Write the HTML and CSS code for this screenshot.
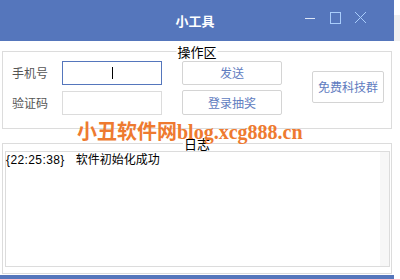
FILE: index.html
```html
<!DOCTYPE html>
<html lang="zh-CN">
<head>
<meta charset="utf-8">
<title>小工具</title>
<link rel="stylesheet" href="styles.css">
</head>
<body>
<div class="page">
  <div class="top">
    <header class="titlebar">
      <span></span>
      <h1 class="title">小工具</h1>
      <svg class="controls" width="62" height="12" viewBox="0 0 62 12">
        <line x1="0" y1="6.5" x2="10" y2="6.5" stroke="#dde6f6" stroke-width="1"/>
        <rect x="25.5" y="0.5" width="10" height="11" fill="none" stroke="#a9cdfb" stroke-width="1"/>
        <line x1="50" y1="0" x2="61" y2="11" stroke="#a9cdfb" stroke-width="1"/>
        <line x1="61" y1="0" x2="50" y2="11" stroke="#a9cdfb" stroke-width="1"/>
      </svg>
    </header>
    <div class="edge"></div>
  </div>

  <section class="group group-ops">
    <span class="legend">操作区</span>
    <div class="form">
      <label class="label">手机号</label>
      <div class="input focused"><span class="caret"></span></div>
      <label class="label">验证码</label>
      <div class="input"></div>
    </div>
    <div class="actions">
      <button class="btn">发送</button>
      <button class="btn">登录抽奖</button>
    </div>
    <div class="side">
      <button class="btn btn-side">免费科技群</button>
    </div>
  </section>

  <section class="group group-log">
    <span class="legend">日志</span>
    <div class="log">
      <div class="log-line"><span class="time">{22:25:38}</span><span class="msg">软件初始化成功</span></div>
      <div class="scroll"></div>
    </div>
  </section>

  <div class="bottom"></div>

  <div class="watermark"><span class="wm-cn">小丑软件网</span><span class="wm-en">blog.xcg888.cn</span></div>
</div>
</body>
</html>
```

FILE: styles.css
```css
* { box-sizing: border-box; }
html, body { margin: 0; padding: 0; background: #ffffff; }
body {
  font-family: "Noto Sans CJK SC", "Noto Sans", sans-serif;
  font-size: 12px;
  color: #000;
}
.page {
  position: relative;
  width: 400px;
  height: 279px;
  overflow: hidden;
}
.top {
  display: flex;
  align-items: flex-start;
}
.titlebar {
  width: 394px;
  height: 41px;
  background: #5576bc;
  display: grid;
  grid-template-columns: 1fr auto 1fr;
  align-items: center;
}
.title {
  margin: 0;
  font-size: 13px;
  font-weight: bold;
  color: #ffffff;
  line-height: 41px;
  position: relative;
  left: -2px;
}
.controls {
  justify-self: end;
  margin-right: 27px;
  margin-top: -6px;
}
.edge {
  width: 6px;
  height: 26px;
  margin-top: 15px;
  background: #f0f0f0;
}

.group {
  position: relative;
  margin-left: 2px;
  width: 390px;
  border: 1px solid #dcdcdc;
}
.legend {
  position: absolute;
  top: -8px;
  left: 50%;
  transform: translateX(-50%);
  background: #ffffff;
  padding: 0 1px;
  font-size: 13px;
  line-height: 15px;
  color: #000;
}
.group-ops {
  margin-top: 10px;
  height: 78px;
  display: flex;
  align-items: flex-start;
  padding: 9px 0 0 9px;
}
.form {
  display: grid;
  grid-template-columns: 50px 100px;
  grid-template-rows: 24px 24px;
  row-gap: 6px;
  align-items: center;
}
.label {
  color: #555555;
  font-size: 12px;
  line-height: 14px;
}
.input {
  height: 24px;
  border: 1px solid #dcdcdc;
  background: #fff;
  display: flex;
  align-items: center;
  justify-content: center;
}
.input.focused { border-color: #5576bc; }
.caret {
  display: block;
  width: 1px;
  height: 12px;
  background: #000;
}
.actions {
  margin-left: 20px;
  display: flex;
  flex-direction: column;
  gap: 5px;
}
.btn {
  font-family: "Noto Sans CJK SC", "Noto Sans", sans-serif;
  font-size: 12px;
  color: #5f7cc0;
  background: #ffffff;
  border: 1px solid #d4d4d4;
  border-radius: 2px;
  width: 100px;
  height: 24px;
  padding: 0;
  line-height: 20px;
}
.actions .btn:last-child { height: 25px; }
.side {
  margin-left: 30px;
  margin-top: 10px;
}
.btn-side {
  width: 72px;
  height: 32px;
}

.group-log {
  margin-top: 14px;
  height: 131px;
  padding: 7px 1px 6px 2px;
}
.log {
  position: relative;
  width: 385px;
  height: 116px;
  border: 1px solid #dcdcdc;
  display: flex;
}
.log-line {
  flex: 1;
  font-size: 12px;
  line-height: 14px;
  white-space: nowrap;
}
.time {
  font-family: "Liberation Sans", sans-serif;
  font-size: 12px;
  letter-spacing: 0.4px;
  margin-right: 11px;
}
.msg { color: #000; }
.scroll {
  width: 9px;
  background: #f7f7f7;
}
.bottom {
  margin-top: 1px;
  width: 394px;
  height: 4px;
  background: #5576bc;
}
.watermark {
  position: absolute;
  left: 77px;
  top: 118px;
  color: #ee7a30;
  font-weight: bold;
  white-space: nowrap;
  line-height: 26px;
}
.wm-cn {
  font-family: "Noto Sans CJK SC", sans-serif;
  font-size: 20px;
}
.wm-en {
  font-family: "Liberation Serif", serif;
  font-size: 20px;
  letter-spacing: 0;
}
```
